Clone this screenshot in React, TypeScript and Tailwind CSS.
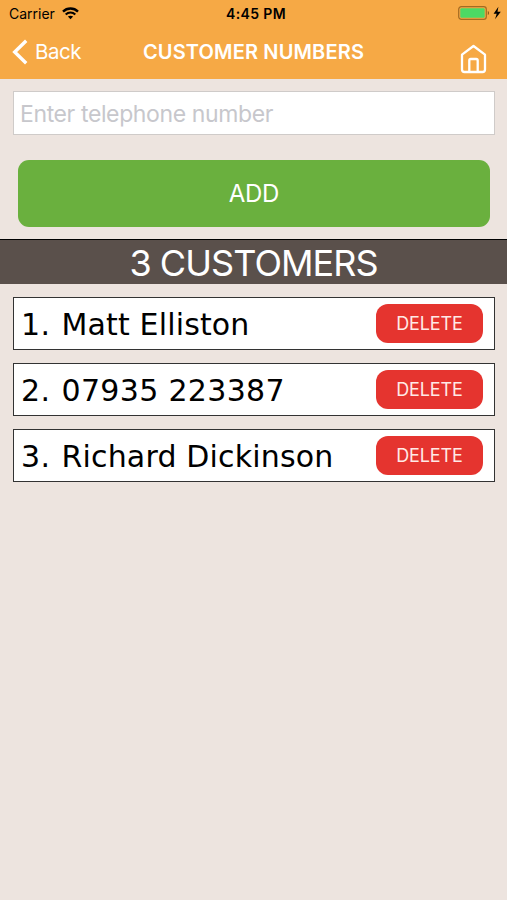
const customers = [
  { name: "Matt Elliston", tracking: "tracking-[0.15px]" },
  { name: "07935 223387", tracking: "tracking-[0.33px]" },
  { name: "Richard Dickinson", tracking: "tracking-[0.17px]" },
];

function StatusBar() {
  return (
    <div className="grid h-[27px] grid-cols-[1fr_auto_1fr] items-center text-black">
      <div className="flex items-center pl-[9px]">
        <span className="text-[14px] leading-[27px]">Carrier</span>
        <svg className="ml-[7px]" width="17" height="13" viewBox="0 0 17 13" fill="none">
          <path d="M1 4.6C5.2 0.5 11.8 0.5 16 4.6" stroke="black" strokeWidth="2.4" />
          <path d="M3.7 7.4C6.4 4.8 10.6 4.8 13.3 7.4" stroke="black" strokeWidth="2.1" />
          <path d="M8.5 12.3L5.9 9.6C7.4 8.3 9.6 8.3 11.1 9.6Z" fill="black" />
        </svg>
      </div>
      <span className="pl-[5px] text-[14px] leading-[27px] font-semibold tracking-[0.35px]">4:45 PM</span>
      <div className="flex items-center justify-end pr-[6px]">
        <svg className="relative -top-px" width="43" height="14" viewBox="0 0 43 14">
          <rect x="0.7" y="0.7" width="27.6" height="12.6" rx="2.6" fill="none" stroke="#a36b22" strokeWidth="1.2" />
          <rect x="2.3" y="2.3" width="24.4" height="9.4" rx="1.2" fill="#4cd964" />
          <path d="M29.8 5C31.4 5.4 31.4 8.6 29.8 9Z" fill="#8a5a1c" />
          <path d="M40.4 0.8L35.6 7.8H38.7L37 13.2L42.8 5.8H39.5Z" fill="black" />
        </svg>
      </div>
    </div>
  );
}

function NavBar() {
  return (
    <div className="grid h-[52px] grid-cols-[1fr_auto_1fr] text-white">
      <div className="flex h-[50px] items-center pl-[12px]">
        <svg width="16" height="26" viewBox="0 0 16 26" fill="none">
          <path d="M14.2 1.8L2.7 13L14.2 24.2" stroke="white" strokeWidth="3.4" />
        </svg>
        <span className="ml-[7px] text-[20.5px] tracking-[-0.5px]">Back</span>
      </div>
      <h1 className="text-[20px] leading-[50px] font-semibold tracking-[0.15px]">CUSTOMER NUMBERS</h1>
      <div className="flex justify-end pt-[17px] pr-[20px]">
        <svg width="27" height="30" viewBox="0 0 27 30" fill="none" stroke="white" strokeWidth="2.3" strokeLinejoin="round">
          <path d="M2 10.7L13.5 2L25 10.7V25.5Q25 28 22.5 28H4.5Q2 28 2 25.5Z" />
          <path d="M9.3 28V16.5Q9.3 15 10.8 15H16.2Q17.7 15 17.7 16.5V28" />
        </svg>
      </div>
    </div>
  );
}

export default function App() {
  return (
    <div className="min-h-[900px] w-[507px] overflow-hidden bg-[#ede4df] font-['Inter',sans-serif]">
      <header className="h-[79px] bg-[#f6a945]">
        <StatusBar />
        <NavBar />
      </header>
      <main>
        <div className="pt-[12px] pr-[12px] pl-[13px]">
          <input
            type="tel"
            placeholder="Enter telephone number"
            className="block h-[44px] w-full border border-[#cfcbc9] bg-white pt-[2px] pl-[6px] text-[23px] tracking-[-0.38px] outline-none placeholder:text-[#c7c7cc]"
          />
        </div>
        <div className="px-[18px] pt-[25px]">
          <button className="block h-[67px] w-[472px] rounded-[11px] bg-[#6ab03e] text-[24px] tracking-[-0.3px] text-white">ADD</button>
        </div>
        <h2 className="mt-[12px] h-[45px] border-t border-black bg-[#5a504b] text-center text-[36px] leading-[46px] font-normal tracking-[-0.95px] text-white">
          3 CUSTOMERS
        </h2>
        <ul className="flex flex-col gap-[13px] pt-[13px] pr-[12px] pl-[13px]">
          {customers.map(({ name, tracking }, i) => (
            <li key={name} className="flex h-[53px] items-center justify-between border border-[#333] bg-white pr-[11px] pl-[7px]">
              <span className="flex pt-[2px] font-['DejaVu_Sans',sans-serif] text-[30px] leading-[49px] text-black">
                <span className="w-[38px] tracking-[0.5px]">{i + 1}.</span>
                <span className={`pl-[2.5px] ${tracking}`}>{name}</span>
              </span>
              <button className="h-[39px] w-[107px] rounded-[12px] bg-[#e5342f] text-[18px] tracking-[-0.1px] text-[#ffe9e6]">DELETE</button>
            </li>
          ))}
        </ul>
      </main>
    </div>
  );
}
